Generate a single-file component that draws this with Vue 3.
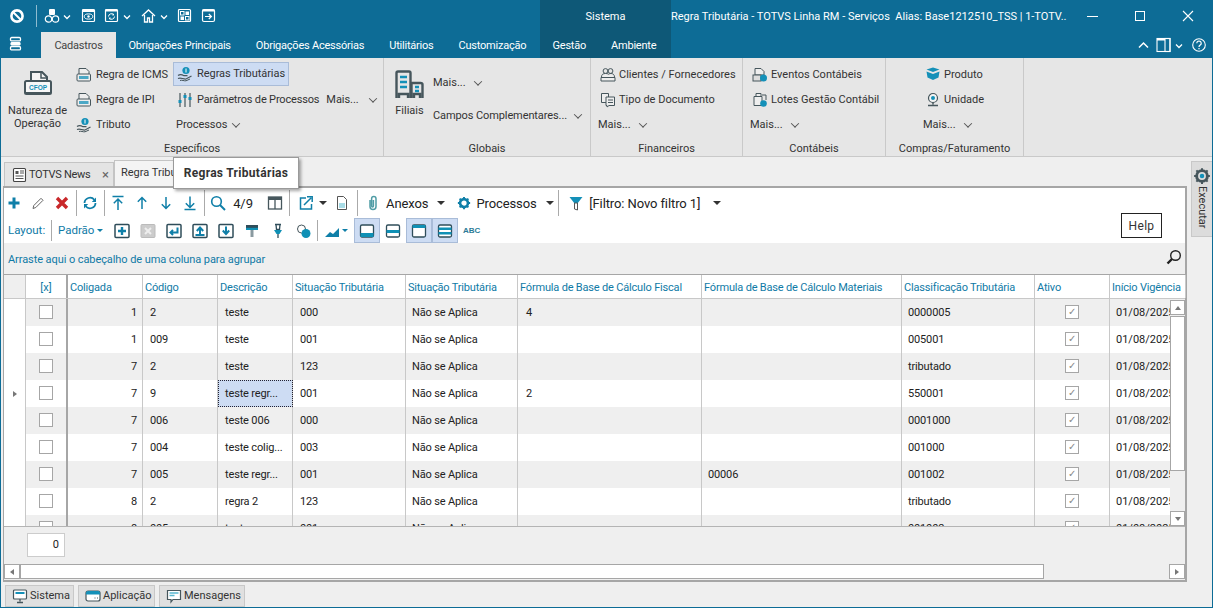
<script setup>
const W = '#fff'
const D = '#46565c'
const B = '#1490b8'
const ic = {
  logo: `<circle cx="8" cy="8" r="5.6" fill="none" stroke="${W}" stroke-width="2.6"/><path d="M4 4l8 8" stroke="${W}" stroke-width="2"/>`,
  cubes: `<rect x="5" y="1" width="6" height="6" rx="1" fill="${W}"/><circle cx="4.5" cy="11" r="3.2" fill="none" stroke="${W}" stroke-width="1.2"/><circle cx="11.5" cy="11" r="3.2" fill="none" stroke="${W}" stroke-width="1.2"/>`,
  eye: `<rect x="1.5" y="1.5" width="12" height="12" rx="1" fill="none" stroke="${W}" stroke-width="1.2"/><rect x="1.5" y="1.5" width="12" height="2.5" fill="${W}"/><ellipse cx="7.5" cy="8.5" rx="4.2" ry="2.6" fill="none" stroke="${W}"/><circle cx="7.5" cy="8.5" r="1.2" fill="${W}"/>`,
  sync: `<rect x="1.5" y="1.5" width="12" height="12" rx="1" fill="none" stroke="${W}" stroke-width="1.2"/><rect x="1.5" y="1.5" width="12" height="2" fill="${W}"/><path d="M4.5 8.5a3 3 0 0 1 5.4-1.6M10.5 8.5a3 3 0 0 1-5.4 1.6" fill="none" stroke="${W}"/><path d="M9 5.2l1.4 2-2.2.2zM6 11.8l-1.4-2 2.2-.2z" fill="${W}"/>`,
  home: `<path d="M1 8l6.5-6 6.5 6M3.5 7v7h3v-4h2v4h3V7" fill="none" stroke="${W}" stroke-width="1.3"/>`,
  panels: `<rect x="1.5" y="1.5" width="12" height="12" rx="1" fill="none" stroke="${W}" stroke-width="1.2"/><rect x="3.5" y="3.5" width="3.5" height="3.5" fill="none" stroke="${W}"/><rect x="8.5" y="3.5" width="3.5" height="3.5" fill="${W}"/><rect x="3.5" y="8.5" width="3.5" height="3.5" fill="${W}"/><rect x="8.5" y="8.5" width="3.5" height="3.5" fill="none" stroke="${W}"/>`,
  exit: `<rect x="1.5" y="1.5" width="12" height="12" rx="1.5" fill="none" stroke="${W}" stroke-width="1.2"/><rect x="1.5" y="1.5" width="12" height="2" fill="${W}"/><path d="M4 8.5h6M7.8 6l2.6 2.5-2.6 2.5" fill="none" stroke="${W}" stroke-width="1.2"/>`,
  menu: `<rect x="2.5" y="1.5" width="10" height="3.4" rx="1.2" fill="none" stroke="${W}" stroke-width="1.3"/><rect x="2.5" y="6" width="10" height="3.4" rx="1.2" fill="${W}"/><rect x="2.5" y="10.5" width="10" height="3.4" rx="1.2" fill="none" stroke="${W}" stroke-width="1.3"/>`,
  chev: `<path d="M3 5.5l3 3 3-3" fill="none" stroke="${W}" stroke-width="1.3"/>`,
  chevUp: `<path d="M2 8.5l4.5-4.5 4.5 4.5" fill="none" stroke="${W}" stroke-width="1.5"/>`,
  layoutW: `<rect x="1" y="1.5" width="13" height="13" fill="none" stroke="${W}" stroke-width="1.1"/><rect x="9" y="1.5" width="5" height="13" fill="none" stroke="${W}" stroke-width="1.1"/><rect x="1" y="1.5" width="8" height="2" fill="${W}"/>`,
  help: `<circle cx="8" cy="8" r="6.3" fill="none" stroke="${W}" stroke-width="1.1"/><path d="M5.8 6.2a2.2 2.2 0 1 1 3.4 1.9c-.8.5-1.2.9-1.2 1.9" fill="none" stroke="${W}" stroke-width="1.2"/><rect x="7.4" y="11" width="1.2" height="1.3" fill="${W}"/>`,
  cfop: `<path d="M8 10V2h11l5 5v3" fill="#f4f4f4" stroke="${D}" stroke-width="2"/><path d="M18 2v6h6" fill="none" stroke="${D}" stroke-width="1.5"/><rect x="2" y="11" width="26" height="13" rx="1.5" fill="#f7f7f7" stroke="${D}" stroke-width="2"/><rect x="2" y="22" width="26" height="2" fill="${D}"/><text x="15" y="20" text-anchor="middle" font-size="6.5" font-weight="700" font-family="Liberation Sans" fill="${B}">CFOP</text>`,
  docTag: `<path d="M3 7V1.5h7l3 3V7" fill="#eee" stroke="${D}"/><rect x="1" y="7" width="13.5" height="7" rx="1" fill="#eee" stroke="${D}"/><rect x="3" y="9" width="9.5" height="3" fill="${B}" opacity=".75"/>`,
  hands: `<circle cx="9" cy="4.5" r="3.6" fill="${B}"/><path d="M9 2.5v4" stroke="#fff"/><path d="M1 9.5c2-1.4 4-1 6 .2h3.5M1 12.5c3-1.4 5 .9 8 .5l5.5-3" fill="none" stroke="${D}" stroke-width="1.2"/><path d="M3 14.5c2-.8 4 .6 6 .3l4-1.8" fill="none" stroke="${D}"/>`,
  sliders: `<path d="M3 1v14M8 1v14M13 1v14" stroke="${D}" stroke-width="1.2"/><rect x="1.5" y="8" width="3" height="3" fill="${B}"/><rect x="6.5" y="3" width="3" height="3" fill="${B}"/><rect x="11.5" y="5" width="3" height="3" fill="${B}"/>`,
  building: `<path d="M1.5 28V3q0-1.500 1.500-1.500h11q1.500 0 1.500 1.500V28M4 28v-4h9v4M16.500 28V13h9q2 0 2 1.500V28M19 28v-4h6v4" fill="none" stroke="${D}" stroke-width="2.400"/><path d="M5 7h7M5 12h7M5 17h7M20 17h4M20 21h4" stroke="${B}" stroke-width="2.400"/>`,
  people: `<circle cx="5.500" cy="4" r="2.400" fill="none" stroke="${D}"/><circle cx="10.500" cy="4" r="2.400" fill="none" stroke="${D}"/><path d="M1.500 10c0-2.500 1.500-3.500 4-3.500s3 .8 3 .8.800-.8 2.500-.8 3.500 1 3.500 3.500M1 10.500h14V14H1z" fill="#eee" stroke="${D}"/>`,
  docs: `<path d="M1.500 1.500h7v9h-7z" fill="#eee" stroke="${D}"/><path d="M6 5h8.500v8.500H9l-2 1.500v-1.500H6z" fill="#eee" stroke="${D}"/><path d="M8 8h5M8 10.500h5" stroke="${D}"/>`,
  events: `<path d="M3 1.500h6l3 3V8H3z" fill="#eee" stroke="${D}"/><rect x="1" y="8" width="8" height="6" fill="#ddd" stroke="${D}"/><circle cx="11.500" cy="11" r="3.500" fill="${B}"/>`,
  lots: `<path d="M4 1.500h5v3H4zM2 4.500h8v9H2z" fill="#eee" stroke="${D}"/><path d="M10 3h4v5" fill="none" stroke="${D}"/><circle cx="11.500" cy="11.500" r="3.300" fill="${B}"/>`,
  box: `<path d="M8 5L1.500 2.500 8 .5l6.500 2zM1.500 4.500L8 7l6.500-2.500-1 6L8 13l-5.500-2.500z" fill="${B}"/>`,
  unit: `<circle cx="8" cy="6" r="4.500" fill="#f4f4f4" stroke="${D}" stroke-width="1.200"/><circle cx="8" cy="6" r="2" fill="${B}"/><path d="M8 10.500v2M3 13.500h10" stroke="${D}" stroke-width="1.500"/>`,
  news: `<rect x="1.500" y="1.500" width="12" height="13" rx="1" fill="#fff" stroke="#444" stroke-width="1.100"/><rect x="3.500" y="4" width="3" height="3" fill="#555"/><path d="M8 4h4M8 6h4M3.500 9h8M3.500 11.500h8" stroke="#555"/>`,
  plus: `<path d="M8 2.500v11M2.500 8h11" stroke="#0f7fa8" stroke-width="3"/>`,
  pencil: `<path d="M3 13.500l.8-3L11 3.300l2 2-7.200 7.200z" fill="#fff" stroke="#666"/>`,
  cross: `<path d="M3 3l10 10M13 3L3 13" stroke="#c9282a" stroke-width="3.400"/>`,
  refresh: `<path d="M2.500 8a5.500 5.500 0 0 1 9.800-3.200M13.500 8a5.500 5.500 0 0 1-9.800 3.200" fill="none" stroke="#0f7fa8" stroke-width="1.800"/><path d="M14 2.500V7H9.800zM2 13.500V9h4.200z" fill="#0f7fa8"/>`,
  top: `<path d="M2.500 1.500h11M8 4v11M3.800 8.200L8 4l4.200 4.200" fill="none" stroke="#0f7fa8" stroke-width="1.500"/>`,
  up: `<path d="M8 2.500V14M3.800 6.700L8 2.500l4.200 4.200" fill="none" stroke="#0f7fa8" stroke-width="1.500"/>`,
  down: `<path d="M8 13.500V2M3.800 9.300L8 13.500l4.200-4.200" fill="none" stroke="#0f7fa8" stroke-width="1.500"/>`,
  bottom: `<path d="M2.500 14.500h11M8 1.500v11M3.800 8.300L8 12.500l4.200-4.200" fill="none" stroke="#0f7fa8" stroke-width="1.500"/>`,
  search: `<circle cx="6.500" cy="6.500" r="4.800" fill="none" stroke="#0f7fa8" stroke-width="1.600"/><path d="M10 10l5 5" stroke="#0f7fa8" stroke-width="2"/>`,
  cols: `<rect x="1.500" y="2" width="13" height="12" fill="none" stroke="#46565c" stroke-width="1.300"/><rect x="1.500" y="2" width="13" height="3" fill="#46565c"/><path d="M8 2v12" stroke="#46565c" stroke-width="1.300"/>`,
  export: `<path d="M8 3H2.500v11h11V9" fill="none" stroke="#0f7fa8" stroke-width="1.500"/><path d="M6 10l7-7M9 1.800h5.200V7" fill="none" stroke="#0f7fa8" stroke-width="1.500"/>`,
  doc: `<path d="M3.500 1.500h6l3 3v10h-9z" fill="#fff" stroke="#555"/><rect x="5" y="8" width="6" height="5" fill="#a8dce6"/>`,
  clip: `<path d="M5 5v6.500a3 3 0 0 0 6 0V3.800a2.200 2.200 0 0 0-4.400 0V11a.9.9 0 0 0 1.800 0V5" fill="none" stroke="#4f9ca5" stroke-width="1.500"/>`,
  gear: `<circle cx="8" cy="8" r="4.500" fill="none" stroke="#0f7fa8" stroke-width="3"/><path d="M8 1v2.500M8 12.500V15M1 8h2.500M12.500 8H15M3 3l1.800 1.800M11.200 11.200L13 13M13 3l-1.800 1.800M4.800 11.200L3 13" stroke="#0f7fa8" stroke-width="2.200"/>`,
  funnel: `<path d="M1.500 2h13L9.800 8H6.200z" fill="#1490b8"/><path d="M6.500 8h3v7l-3-1z" fill="#fff" stroke="#555"/>`,
  addRow: `<rect x="1" y="1.500" width="14" height="13" rx="1" fill="#fff" stroke="#2f4d5a" stroke-width="1.500"/><path d="M8 4v8M4 8h8" stroke="#0f7fa8" stroke-width="2.400"/>`,
  delRow: `<rect x="1" y="1.500" width="14" height="13" rx="1" fill="#ccc" stroke="#bbb"/><path d="M5 5l6 6M11 5l-6 6" stroke="#eee" stroke-width="2"/>`,
  enter: `<rect x="1" y="1.500" width="14" height="13" rx="1" fill="#fff" stroke="#2f4d5a" stroke-width="1.500"/><path d="M11.500 4.500v5H5M7 7L4.500 9.500 7 12" fill="none" stroke="#0f7fa8" stroke-width="2"/>`,
  upBox: `<rect x="1" y="1.500" width="14" height="13" rx="1" fill="#fff" stroke="#2f4d5a" stroke-width="1.500"/><path d="M8 11V5.500M4.800 8L8 4.500 11.200 8M3.500 12h9" fill="none" stroke="#0f7fa8" stroke-width="2"/>`,
  dnBox: `<rect x="1" y="1.500" width="14" height="13" rx="1" fill="#fff" stroke="#2f4d5a" stroke-width="1.500"/><path d="M8 3.500V10M4.800 7.500L8 11l3.200-3.500" fill="none" stroke="#0f7fa8" stroke-width="2"/>`,
  brush: `<path d="M2 2h12v5H2z" fill="#2f4d5a"/><path d="M2 4.800h12V7H2z" fill="#0f90b5"/><path d="M6.500 7h3v7h-3z" fill="#8a9aa0"/>`,
  pin: `<path d="M5 1.500h6M6 1.500l.5 5h3l.5-5" fill="none" stroke="#2f4d5a" stroke-width="1.300"/><path d="M4 7h8L9.500 11h-3z" fill="#0f90b5"/><path d="M8 11v4" stroke="#2f4d5a" stroke-width="1.300"/>`,
  circles: `<circle cx="5.500" cy="6" r="4" fill="none" stroke="#46565c"/><circle cx="10" cy="10.500" r="4.500" fill="#0f90b5"/>`,
  chart: `<path d="M1 14l5-5 3 2 6-6v9z" fill="#0f7fa8"/>`,
  l1: `<rect x="1.500" y="2" width="13" height="12" rx="1.500" fill="#fff" stroke="#2f4d5a" stroke-width="1.300"/><rect x="1.500" y="10" width="13" height="4" fill="#0f90b5"/>`,
  l2: `<rect x="1.500" y="2" width="13" height="12" rx="1.500" fill="#fff" stroke="#2f4d5a" stroke-width="1.300"/><rect x="1.500" y="7" width="13" height="3" fill="#0f90b5"/>`,
  l3: `<rect x="1.500" y="2" width="13" height="12" rx="1.500" fill="#fff" stroke="#2f4d5a" stroke-width="1.300"/><rect x="1.500" y="2" width="13" height="3" fill="#0f90b5"/>`,
  l4: `<rect x="1.500" y="2" width="13" height="12" rx="1.500" fill="#fff" stroke="#2f4d5a" stroke-width="1.300"/><rect x="1.500" y="4.500" width="13" height="2.500" fill="#0f90b5"/><rect x="1.500" y="9" width="13" height="2.500" fill="#0f90b5"/>`,
  gearBig: `<circle cx="8" cy="8" r="4.800" fill="none" stroke="#46565c" stroke-width="2.600"/><circle cx="8" cy="8" r="2" fill="#1490b8"/><path d="M8 1v2M8 13v2M1 8h2M13 8h2M3 3l1.500 1.500M11.500 11.500L13 13M13 3l-1.500 1.500M4.500 11.500L3 13" stroke="#46565c" stroke-width="1.800"/>`,
  glass: `<circle cx="9.500" cy="6.500" r="4.800" fill="none" stroke="#222" stroke-width="1.400"/><path d="M6 10l-4.500 4.500" stroke="#222" stroke-width="2.400"/>`,
  monitor: `<rect x="1.500" y="2" width="13" height="9" rx="1" fill="#fff" stroke="#46565c" stroke-width="1.200"/><rect x="3.500" y="4" width="9" height="2" fill="#1490b8"/><path d="M8 11v2.500M5 14.500h6" stroke="#46565c" stroke-width="1.300"/>`,
  app: `<rect x="1" y="3" width="14" height="10" rx="2" fill="#fff" stroke="#46565c" stroke-width="1.200"/><path d="M1 6.500V5q0-2 2-2h10q2 0 2 2v1.500z" fill="#1490b8"/><path d="M9.500 10h1M12 10h1" stroke="#46565c"/>`,
  msg: `<path d="M1.500 2.500h13v9H7L5 14v-2.500H1.500z" fill="#fff" stroke="#46565c" stroke-width="1.200"/><path d="M3.500 5h9M3.500 7.500h5" stroke="#5ab7cf" stroke-width="1.500"/>`,
}
const quick = [
  { n: 'cubes', c: 1 }, { n: 'eye' }, { n: 'sync', c: 1 }, { n: 'home', c: 1 }, { n: 'panels' }, { n: 'exit' },
]
const tabs = ['Obrigações Principais', 'Obrigações Acessórias', 'Utilitários', 'Customização']
const barA = [
  { n: 'plus' }, { n: 'pencil' }, { n: 'cross' }, { s: 1 }, { n: 'refresh' }, { s: 1 },
  { n: 'top' }, { n: 'up' }, { n: 'down' }, { n: 'bottom' }, { s: 1 }, { n: 'search' },
]
const barB = ['addRow', 'delRow', 'enter', 'upBox', 'dnBox', 'brush', 'pin', 'circles']
const head = ['Coligada', 'Código', 'Descrição', 'Situação Tributária', 'Situação Tributária', 'Fórmula de Base de Cálculo Fiscal', 'Fórmula de Base de Cálculo Materiais', 'Classificação Tributária', 'Ativo', 'Início Vigência']
const rows = [
  ['1', '2', 'teste', '000', '4', '', '0000005'],
  ['1', '009', 'teste', '001', '', '', '005001'],
  ['7', '2', 'teste', '123', '', '', 'tributado'],
  ['7', '9', 'teste regr...', '001', '2', '', '550001'],
  ['7', '006', 'teste 006', '000', '', '', '0001000'],
  ['7', '004', 'teste colig...', '003', '', '', '001000'],
  ['7', '005', 'teste regr...', '001', '', '00006', '001002'],
  ['8', '2', 'regra 2', '123', '', '', 'tributado'],
  ['8', '005', 'teste regr...', '001', '', '', '001002'],
]
</script>

<template>
  <div class="win">
    <header class="title">
      <div class="quick">
        <svg class="i16 logo" viewBox="0 0 16 16" v-html="ic.logo"></svg>
        <span class="qsep"></span>
        <span v-for="q in quick" :key="q.n" class="qbtn">
          <svg class="i16" viewBox="0 0 16 16" v-html="ic[q.n]"></svg>
          <svg v-if="q.c" class="i12" viewBox="0 0 12 12" v-html="ic.chev"></svg>
        </span>
      </div>
      <div class="ctx ctx-title">Sistema</div>
      <div class="wintext">Regra Tributária - TOTVS Linha RM - Serviços&nbsp; Alias: Base1212510_TSS | 1-TOTV...</div>
      <div class="winbtns">
        <svg class="wb" viewBox="0 0 48 31"><path d="M19 16.500h11" stroke="#fff" stroke-width="1"/></svg>
        <svg class="wb" viewBox="0 0 48 31"><rect x="19.500" y="11.500" width="9" height="9" fill="none" stroke="#fff"/></svg>
        <svg class="wb" viewBox="0 0 48 31"><path d="M19 11l10 10M29 11L19 21" stroke="#fff" stroke-width="1.100"/></svg>
      </div>
    </header>

    <nav class="menu">
      <div class="menu-left">
        <svg class="i16 menuic" viewBox="0 0 16 16" v-html="ic.menu"></svg>
        <span class="tab active">Cadastros</span>
        <span v-for="t in tabs" :key="t" class="tab">{{ t }}</span>
      </div>
      <div class="ctx ctx-tabs">
        <span class="tab">Gestão</span>
        <span class="tab">Ambiente</span>
      </div>
      <div class="menu-right">
        <svg class="i12" viewBox="0 0 12 12" v-html="ic.chevUp"></svg>
        <svg class="i16" viewBox="0 0 16 16" v-html="ic.layoutW"></svg>
        <svg class="i12 cv" viewBox="0 0 12 12" v-html="ic.chev"></svg>
        <svg class="i16 hp" viewBox="0 0 16 16" v-html="ic.help"></svg>
      </div>
    </nav>

    <section class="ribbon">
      <div class="group g1">
        <div class="gbody">
          <div class="big natureza">
            <svg class="i30" viewBox="0 0 30 30" v-html="ic.cfop"></svg>
            <span>Natureza de<br />Operação</span>
          </div>
          <div class="col c2">
            <div class="ri"><svg class="i16" viewBox="0 0 16 16" v-html="ic.docTag"></svg>Regra de ICMS</div>
            <div class="ri"><svg class="i16" viewBox="0 0 16 16" v-html="ic.docTag"></svg>Regra de IPI</div>
            <div class="ri"><svg class="i16" viewBox="0 0 16 16" v-html="ic.hands"></svg>Tributo</div>
          </div>
          <div class="col c3">
            <div class="ri hot"><svg class="i16" viewBox="0 0 16 16" v-html="ic.hands"></svg>Regras Tributárias</div>
            <div class="ri"><svg class="i16" viewBox="0 0 16 16" v-html="ic.sliders"></svg><span class="param">Parâmetros de Processos</span><span class="more inl">Mais... <i class="cvd"></i></span></div>
            <div class="ri plain">Processos <i class="cvd m6"></i></div>
          </div>
        </div>
        <div class="glabel">Específicos</div>
      </div>

      <div class="group g2">
        <div class="gbody">
          <div class="big filiais">
            <svg class="i30" viewBox="0 0 30 30" v-html="ic.building"></svg>
            <span>Filiais</span>
          </div>
          <div class="col c-fil">
            <div class="plain">Mais... <i class="cvd m7"></i></div>
            <div class="plain campos">Campos Complementares... <i class="cvd m5"></i></div>
          </div>
        </div>
        <div class="glabel">Globais</div>
      </div>

      <div class="group g3">
        <div class="gbody col pad">
          <div class="ri"><svg class="i16" viewBox="0 0 16 16" v-html="ic.people"></svg>Clientes / Fornecedores</div>
          <div class="ri"><svg class="i16" viewBox="0 0 16 16" v-html="ic.docs"></svg>Tipo de Documento</div>
          <div class="ri plain">Mais... <i class="cvd"></i></div>
        </div>
        <div class="glabel">Financeiros</div>
      </div>

      <div class="group g4">
        <div class="gbody col pad">
          <div class="ri"><svg class="i16" viewBox="0 0 16 16" v-html="ic.events"></svg>Eventos Contábeis</div>
          <div class="ri"><svg class="i16" viewBox="0 0 16 16" v-html="ic.lots"></svg>Lotes Gestão Contábil</div>
          <div class="ri plain">Mais... <i class="cvd"></i></div>
        </div>
        <div class="glabel">Contábeis</div>
      </div>

      <div class="group g5">
        <div class="gbody col pad5">
          <div class="ri"><svg class="i16" viewBox="0 0 16 16" v-html="ic.box"></svg>Produto</div>
          <div class="ri"><svg class="i16" viewBox="0 0 16 16" v-html="ic.unit"></svg>Unidade</div>
          <div class="ri plain">Mais... <i class="cvd"></i></div>
        </div>
        <div class="glabel">Compras/Faturamento</div>
      </div>
      <div class="rest"></div>
    </section>

    <main class="work">
      <div class="doc">
        <div class="doctabs">
          <div class="dtab">
            <svg class="i16" viewBox="0 0 16 16" v-html="ic.news"></svg>
            <span class="news">TOTVS News</span>
            <span class="x">×</span>
          </div>
          <div class="dtab cur">Regra Tributária</div>
        </div>

        <div class="panel">
          <div class="bar1">
            <template v-for="(b, i) in barA" :key="i">
              <span v-if="b.s" class="vsep"></span>
              <span v-else class="b24"><svg class="i16" viewBox="0 0 16 16" v-html="ic[b.n]"></svg></span>
            </template>
            <span class="count">4/9</span>
            <span class="b24 colsb"><svg class="i16" viewBox="0 0 16 16" v-html="ic.cols"></svg></span>
            <span class="vsep"></span>
            <span class="b24 w18"><svg class="i16" viewBox="0 0 16 16" v-html="ic.export"></svg></span>
            <i class="caret back"></i>
            <span class="b24 w22"><svg class="i16" viewBox="0 0 16 16" v-html="ic.doc"></svg></span>
            <span class="vsep"></span>
            <span class="lbl first"><svg class="i16" viewBox="0 0 16 16" v-html="ic.clip"></svg>Anexos</span>
            <i class="caret c13"></i>
            <span class="lbl second"><svg class="i14" viewBox="0 0 16 16" v-html="ic.gear"></svg>Processos</span>
            <i class="caret c9"></i>
            <span class="vsep s6"></span>
            <span class="lbl third"><svg class="i16" viewBox="0 0 16 16" v-html="ic.funnel"></svg>[Filtro: Novo filtro 1]</span>
            <i class="caret c13b"></i>
          </div>

          <div class="bar2">
            <span class="lay">Layout:</span>
            <span class="vsep short"></span>
            <span class="pad-l">Padrão</span>
            <i class="caret blue"></i>
            <span class="icons2">
              <span v-for="n in barB" :key="n" class="b26"><svg class="i16" viewBox="0 0 16 16" v-html="ic[n]"></svg></span>
            </span>
            <span class="vsep short s2"></span>
            <span class="b26 w22"><svg class="i16" viewBox="0 0 16 16" v-html="ic.chart"></svg></span>
            <i class="caret blue nm"></i>
            <span class="lays">
              <span class="b26 on"><svg class="i16" viewBox="0 0 16 16" v-html="ic.l1"></svg></span>
              <span class="b26"><svg class="i16" viewBox="0 0 16 16" v-html="ic.l2"></svg></span>
              <span class="b26 on"><svg class="i16" viewBox="0 0 16 16" v-html="ic.l3"></svg></span>
              <span class="b26 on"><svg class="i16" viewBox="0 0 16 16" v-html="ic.l4"></svg></span>
            </span>
            <span class="abc">ABC</span>
          </div>

          <div class="groupby">
            <span>Arraste aqui o cabeçalho de uma coluna para agrupar</span>
            <svg class="i16" viewBox="0 0 16 16" v-html="ic.glass"></svg>
          </div>

          <div class="grid-wrap">
            <div class="row hdr">
              <span class="rh"></span>
              <span class="ck">[x]</span>
              <span v-for="(h, i) in head" :key="i" class="th">{{ h }}</span>
            </div>
            <div class="body">
              <div v-for="(r, i) in rows" :key="i" class="row" :class="{ zebra: i % 2 === 0 }">
                <span class="rh"><i v-if="i === 3" class="rowmark"></i></span>
                <span class="ck"><i class="box"></i></span>
                <span class="td num">{{ r[0] }}</span>
                <span class="td ins">{{ r[1] }}</span>
                <span class="td ins" :class="{ sel: i === 3 }">{{ r[2] }}</span>
                <span class="td ins">{{ r[3] }}</span>
                <span class="td ins1">Não se Aplica</span>
                <span class="td ins2">{{ r[4] }}</span>
                <span class="td ins1">{{ r[5] }}</span>
                <span class="td ins1">{{ r[6] }}</span>
                <span class="td chk"><i class="box on">✓</i></span>
                <span class="td ins1 date">01/08/2025</span>
              </div>
              <div class="vscroll">
                <span class="sb"><i class="tri up"></i></span>
                <span class="track"></span>
                <span class="sb"><i class="tri dn"></i></span>
              </div>
            </div>
          </div>

          <div class="footer"><span class="sum">0</span></div>

          <div class="hscroll">
            <span class="hb"><i class="tri lf"></i></span>
            <span class="htrack"></span>
            <span class="hb"><i class="tri rt"></i></span>
          </div>
        </div>

        <div class="btabs">
          <span class="bt b1"><svg class="i16" viewBox="0 0 16 16" v-html="ic.monitor"></svg>Sistema</span>
          <span class="bt b2"><svg class="i16" viewBox="0 0 16 16" v-html="ic.app"></svg>Aplicação</span>
          <span class="bt b3"><svg class="i16" viewBox="0 0 16 16" v-html="ic.msg"></svg>Mensagens</span>
        </div>

        <div class="tip">Regras Tributárias</div>
        <div class="helptip">Help</div>
      </div>

      <aside class="side">
        <div class="exec">
          <svg class="i18" viewBox="0 0 16 16" v-html="ic.gearBig"></svg>
          <span>Executar</span>
        </div>
      </aside>
    </main>
  </div>
</template>

<style>
html, body { margin: 0; padding: 0; overflow: hidden; background: #efefef; }
</style>

<style scoped>
.win {
  width: 1213px; height: 608px; box-sizing: border-box;
  display: flex; flex-direction: column; overflow: hidden;
  font: 11px/14px Roboto, "Noto Sans", sans-serif; color: #333;
  background: #efefef; border: solid #0d6c96; border-width: 0 1px 1px 1px;
}
svg { display: block; flex: none; }
.i12 { width: 12px; height: 12px; }
.i14 { width: 14px; height: 14px; }
.i16 { width: 16px; height: 16px; }
.i18 { width: 18px; height: 18px; }
.i30 { width: 30px; height: 30px; }

.title { height: 31px; flex: none; display: flex; background: #0d6c96; color: #fff; }
.quick { width: 539px; flex: none; display: flex; align-items: center; padding-left: 8px; box-sizing: border-box; }
.qsep { width: 1px; height: 22px; background: #8fbcd0; margin: 0 7px 0 11px; }
.qbtn { display: flex; align-items: center; margin-right: 7.500px; }
.qbtn svg + svg { margin-left: 1px; }
.ctx { background: #0e5877; }
.ctx-title { width: 131px; flex: none; display: flex; align-items: center; justify-content: center; padding-top: 2px; box-sizing: border-box; }
.wintext { width: 396px; flex: none; line-height: 33px; white-space: nowrap; overflow: hidden; }
.winbtns { display: flex; flex: 1; justify-content: flex-end; }
.wb { width: 48px; height: 31px; }

.menu { height: 27px; flex: none; display: flex; background: #0d6c96; color: #fff; align-items: stretch; }
.menu-left { width: 539px; flex: none; display: flex; }
.menuic { margin: 5px 17px 0 7px; }
.tab { padding: 2px 12.500px 0; display: flex; align-items: center; white-space: nowrap; letter-spacing: -.22px; flex: none; }
.tab.active { background: #e6e6e6; color: #444; margin-top: 1px; width: 75px; box-sizing: border-box; justify-content: center; padding: 1px 0 0; }
.ctx-tabs { display: flex; width: 131px; flex: none; }
.menu-right { display: flex; flex: 1; justify-content: flex-end; align-items: center; padding-right: 5px; }
.menu-right .i16 { margin-left: 7px; }
.menu-right .cv { margin-left: 1px; }
.menu-right .hp { margin: 0 0 0 6px; }

.ribbon { height: 99px; flex: none; display: flex; background: #e6e6e6; border-bottom: 1px solid #c9c9c9; box-sizing: border-box; }
.group { display: flex; flex-direction: column; border-right: 1px solid #c9c9c9; box-sizing: border-box; flex: none; }
.g1 { width: 383px; }
.g2 { width: 207px; }
.g3 { width: 152px; }
.g4 { width: 143px; }
.g5 { width: 138px; }
.rest { flex: 1; }
.gbody { height: 84px; display: flex; padding-top: 4px; box-sizing: border-box; }
.glabel { text-align: center; line-height: 14px; padding-top: 1px; }
.col { display: flex; flex-direction: column; }
.ri { height: 25px; display: flex; align-items: center; white-space: nowrap; }
.ri svg { margin-right: 4px; }
.big { display: flex; flex-direction: column; align-items: center; text-align: center; line-height: 13px; }
.natureza { width: 67px; margin-left: 3px; padding-top: 8px; }
.natureza span { margin-top: 4px; }
.c2 { width: 97px; margin-left: 5px; }
.c3 { flex: 1; letter-spacing: -.05px; }
.param { letter-spacing: -.17px; }
.hot { background: #cddcf3; box-shadow: inset 0 0 0 1px #a9bcd8; width: 116px; height: 24px; margin-bottom: 1px; padding-left: 4px; box-sizing: border-box; }
.c3 .ri:not(.hot):not(.plain) { padding-left: 4px; }
.c3 .plain { padding-left: 3px; }
.more.inl { margin-left: 7px; }
.cvd { display: inline-block; width: 5px; height: 5px; border: solid #555; border-width: 0 1px 1px 0; transform: rotate(45deg) translate(-1px, -1px); margin-left: 9px; }
.more .cvd { margin-left: 9px; }
.cvd.m6 { margin-left: 6px; }
.cvd.m7 { margin-left: 7px; }
.cvd.m5 { margin-left: 5px; }
.campos { letter-spacing: -.1px; }
.filiais { width: 43px; margin-left: 4px; padding-top: 8px; }
.filiais span { margin-top: 4px; }
.c-fil { margin-left: 2px; padding-top: 14px; gap: 19px; white-space: nowrap; }
.pad { flex-direction: column; padding-left: 9px; }
.pad .ri svg { margin-right: 3px; }
.pad .plain { margin-left: -2px; }
.pad5 { flex-direction: column; padding-left: 37px; }
.pad5 .ri:not(.plain) { padding-left: 2px; }
.pad5 .ri svg { margin-right: 3px; }

.work { flex: 1; min-height: 0; display: flex; }
.doc { width: 1188px; flex: none; padding: 3px 0 0 2px; box-sizing: border-box; display: flex; flex-direction: column; position: relative; }
.doctabs { height: 26px; flex: none; display: flex; padding-left: 1px; align-items: flex-end; }
.dtab { height: 24px; display: flex; align-items: center; gap: 1px; padding: 0 4px 0 7px; background: #e4e4e4; border: 1px solid #c4c4c4; border-bottom: 0; box-sizing: border-box; width: 110px; }
.news { white-space: nowrap; letter-spacing: -.3px; padding-top: 1px; }
.x { margin-left: auto; color: #666; font-size: 13px; }
.dtab.cur { height: 26px; background: #f4f4f4; width: 120px; padding-left: 6px; align-items: flex-start; padding-top: 5px; }
.panel { flex: 1; min-height: 0; display: flex; flex-direction: column; background: #fff; border: 2px solid #a6a6a6; border-left-width: 1px; box-sizing: border-box; width: 1184px; }

.bar1 { height: 30px; flex: none; display: flex; align-items: center; color: #222; font-size: 13px; margin-left: -2px; letter-spacing: -.1px; }
.b24 { width: 24px; display: flex; justify-content: center; flex: none; }
.vsep { width: 1px; height: 26px; background: #aaa; margin: 0 1.500px; flex: none; }
.count { width: 26px; text-align: center; flex: none; padding-top: 1px; }
.colsb { margin-left: 7px; }
.w18 { width: 30px; }
.w22 { width: 26px; margin-left: 2px; }
.caret { width: 0; height: 0; border: 4px solid transparent; border-top: 4px solid #333; border-bottom: 0; flex: none; margin: 0 0 0 3px; }
.caret.back { margin-left: -2px; }
.caret.blue { border-top-color: #0f7fa8; margin-left: 3px; border-width: 3px; border-bottom: 0; }
.caret.nm { margin-left: -2px; }
.c13 { margin-left: 9px; }
.c13b { margin-left: 13px; }
.c9 { margin-left: 9px; }
.lbl { display: flex; align-items: center; gap: 5px; white-space: nowrap; padding-top: 1px; }
.lbl svg { margin-top: -1px; }
.first { margin-left: 6px; }
.second { margin-left: 12px; }
.vsep.s6 { margin-left: 4px; }
.third { margin-left: 8px; }

.bar2 { height: 25px; flex: none; display: flex; align-items: center; color: #0f7aa6; padding-left: 4px; font-size: 11.500px; }
.lay { width: 43px; flex: none; padding-bottom: 2px; }
.vsep.short { height: 21px; margin: 0 6px 0 0; }
.pad-l { width: 36px; flex: none; white-space: nowrap; padding-bottom: 2px; }
.icons2 { display: flex; margin-left: 6px; }
.b26 { width: 26px; height: 25px; display: flex; align-items: center; justify-content: center; box-sizing: border-box; flex: none; }
.b26.w22 { width: 24px; margin-left: 2px; }
.b26.on { background: #cddcf3; box-shadow: inset 0 0 0 1px #a9bcd8; }
.vsep.s2 { margin: 0; }
.lays { display: flex; margin-left: 6px; }
.abc { font: 700 8px/1 "Liberation Sans", sans-serif; color: #2b7a96; margin-left: 5px; }

.groupby { height: 32px; flex: none; background: #efefef; display: flex; align-items: center; justify-content: space-between; padding: 0 3px 0 4px; color: #0f7aa6; border-bottom: 1px solid #a6a6a6; box-sizing: border-box; letter-spacing: -.08px; }
.groupby span { margin-top: 3px; }
.groupby svg { margin-top: -3px; }

.grid-wrap { flex: none; background: #fff; }
.row { display: grid; grid-template-columns: 22px 42px 75px 75px 75px 113px 112px 184px 200px 133px 75px 76px; height: 27px; }
.hdr { height: 24px; border-bottom: 1px solid #c8c8c8; box-sizing: border-box; }
.rh { background: #fff; border-right: 1px solid #c8c8c8; display: flex; align-items: center; justify-content: center; }
.hdr .rh { background: #efefef; }
.ck { border-right: 2px solid #a6a6a6; display: flex; align-items: center; justify-content: center; color: #0f7aa6; box-sizing: border-box; padding-bottom: 1px; }
.th, .td { display: flex; align-items: center; border-right: 1px solid #c8c8c8; white-space: nowrap; overflow: hidden; box-sizing: border-box; }
.th { color: #0f7aa6; padding-left: 2px; padding-top: 2px; letter-spacing: -.18px; }
.td { color: #222; letter-spacing: -.15px; }
.hdr .ck { padding: 2px 0 0; }
.zebra { background: #efefef; }
.num { justify-content: flex-end; padding-right: 5px; }
.ins { padding-left: 7px; }
.ins1 { padding-left: 6px; }
.ins2 { padding-left: 8px; }
.sel { background: #cddcf3; outline: 1px dotted #223; outline-offset: -1px; }
.box { width: 12px; height: 12px; display: block; background: #fff; border: 1px solid #a6a6a6; }
.chk { justify-content: center; padding-bottom: 1px; }
.box.on { color: #888; font: 10px/12px "DejaVu Sans", sans-serif; text-align: center; font-style: normal; }
.date { border: 0; letter-spacing: 0; }
.rowmark { width: 0; height: 0; border: 3.500px solid transparent; border-left: 4px solid #777; border-right: 0; }
.body { height: 227px; overflow: hidden; position: relative; }
.vscroll { position: absolute; right: 0; top: 1px; bottom: 0; width: 15px; display: flex; flex-direction: column; background: #efefef; }
.sb { height: 15px; background: #fff; border: 1px solid #a6a6a6; box-sizing: border-box; display: flex; align-items: center; justify-content: center; flex: none; }
.track { height: 155px; background: #fff; border: 1px solid #a6a6a6; box-sizing: border-box; margin-top: 1px; flex: none; }
.vscroll .sb:last-child { margin-top: auto; }
.tri { width: 0; height: 0; border: 3px solid transparent; display: block; }
.tri.up { border-bottom: 4px solid #777; border-top: 0; }
.tri.dn { border-top: 4px solid #777; border-bottom: 0; }
.tri.lf { border-right: 4px solid #777; border-left: 0; }
.tri.rt { border-left: 4px solid #777; border-right: 0; }

.footer { flex: 1; min-height: 0; background: #efefef; border-top: 1px solid #b4b4b4; display: flex; align-items: flex-start; padding: 6px 0 0 23px; }
.sum { width: 38px; height: 24px; box-sizing: border-box; background: #fff; border: 1px solid #ccc; text-align: right; padding: 4px 5px 0 0; color: #222; }
.hscroll { height: 16px; flex: none; display: flex; background: #efefef; }
.hb { width: 16px; height: 15px; background: #fff; border: 1px solid #a6a6a6; box-sizing: border-box; display: flex; align-items: center; justify-content: center; flex: none; }
.htrack { width: 1024px; background: #fff; border: 1px solid #a6a6a6; box-sizing: border-box; height: 15px; flex: none; }
.hscroll .hb:last-child { margin-left: auto; }

.btabs { height: 25px; flex: none; display: flex; gap: 4px; padding: 3px 0 0 2px; box-sizing: border-box; }
.bt { height: 22px; display: flex; align-items: center; gap: 2px; padding-left: 6px; background: #e0e0e0; border: 1px solid #c8c8c8; box-sizing: border-box; white-space: nowrap; flex: none; }
.b1 { width: 69px; }
.b2 { width: 77px; }
.b3 { width: 86px; }

.tip { position: absolute; left: 172px; top: 0; width: 126px; height: 32px; box-sizing: border-box; background: #fff; border: 1px solid #9a9a9a; box-shadow: 2px 2px 3px rgba(0,0,0,.35); font-weight: 700; font-size: 12px; letter-spacing: .3px; color: #333; display: flex; align-items: center; justify-content: center; }
.helptip { position: absolute; left: 1120px; top: 56px; width: 41px; height: 25px; box-sizing: border-box; background: #fff; border: 1px solid #222; color: #333; font-size: 12px; letter-spacing: .3px; display: flex; align-items: center; justify-content: center; }

.side { flex: 1; padding: 4px 0 0 2px; }
.exec { width: 22px; height: 76px; background: #dcdcdc; border: 1px solid #c8c8c8; box-sizing: border-box; display: flex; flex-direction: column; align-items: center; padding-top: 5px; gap: 1px; }
.exec span { writing-mode: vertical-rl; color: #333; }
</style>
